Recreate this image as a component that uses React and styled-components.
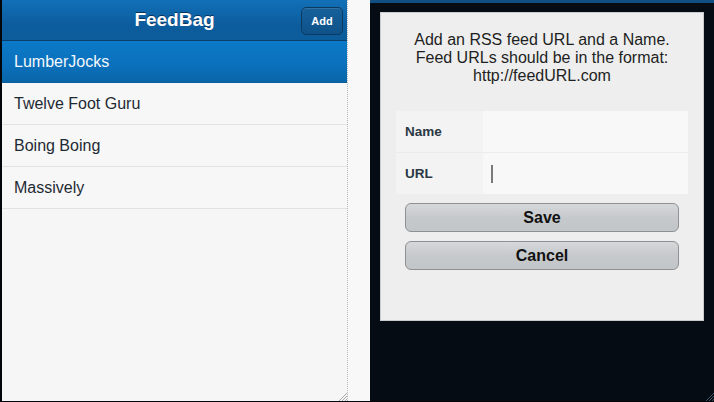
import React from "react";
import styled, { createGlobalStyle } from "styled-components";

const Global = createGlobalStyle`
  html, body { margin: 0; padding: 0; background: #000; }
  body { font-family: "Liberation Sans", Arial, Helvetica, sans-serif; }
`;

const Frame = styled.div`
  display: flex;
  width: 714px;
  height: 402px;
  box-sizing: border-box;
  border-left: 2px solid #02060a;
  border-bottom: 1px solid #02060a;
  overflow: hidden;
`;

const LeftPane = styled.div`
  position: relative;
  width: 345px;
  display: flex;
  flex-direction: column;
  background: #f6f6f6;
  border-right: 1px dotted #b8b8b8;
`;

const Header = styled.div`
  position: relative;
  height: 40px;
  display: flex;
  align-items: center;
  justify-content: center;
  background: linear-gradient(#1270b8, #0c5d9e 60%, #0d5c9a);
  border-bottom: 1px solid #0a3e6c;
`;

const Title = styled.h1`
  margin: 0;
  font-size: 19px;
  font-weight: bold;
  color: #fff;
  text-shadow: 0 -1px 0 #08345c;
`;

const AddButton = styled.button`
  position: absolute;
  right: 4px;
  top: 7px;
  width: 42px;
  height: 28px;
  box-sizing: border-box;
  border: 1px solid #0b3a60;
  border-radius: 5px;
  background: linear-gradient(#16609a, #0f5289);
  box-shadow: inset 0 1px 0 rgba(255,255,255,0.12);
  color: #fff;
  font-family: inherit;
  font-size: 11px;
  font-weight: bold;
  padding: 0;
`;

const List = styled.ul`
  list-style: none;
  margin: 0;
  padding: 0;
`;

const Row = styled.li`
  height: 41px;
  display: flex;
  align-items: center;
  padding-left: 12px;
  font-size: 16px;
  color: ${(p) => (p.$active ? "#f4f8fc" : "#1e2a33")};
  background: ${(p) =>
    p.$active ? "linear-gradient(#0b7ac8, #0b70bb 60%, #0965a8)" : "#f7f7f7"};
  border-bottom: 1px solid ${(p) => (p.$active ? "#0a5f9c" : "#e2e2e2")};
`;

const Grip = styled.svg`
  position: absolute;
  right: 0;
  bottom: 0;
`;

const Strip = styled.div`
  width: 22px;
  background: #f8f8f8;
`;

const RightPane = styled.div`
  position: relative;
  flex: 1;
  background: #050c13;
  border-top: 3px solid #104f82;
  padding: 9px 10px 0 10px;
`;

const Dialog = styled.div`
  box-sizing: border-box;
  height: 309px;
  background: #eeeeee;
  border: 1px solid #c9cbcd;
  padding: 18px 15px 0 15px;
  display: flex;
  flex-direction: column;
`;

const Intro = styled.p`
  margin: 0 0 26px;
  text-align: center;
  font-size: 16px;
  line-height: 18px;
  color: #1d1f22;
`;

const Fields = styled.div`
  display: flex;
  flex-direction: column;
  background: #f8f8f8;
  margin-bottom: 9px;
`;

const Field = styled.label`
  display: flex;
  height: 41px;
  border-top: ${(p) => (p.$first ? "none" : "1px solid #ececec")};
`;

const Label = styled.span`
  width: 87px;
  display: flex;
  align-items: center;
  padding-left: 9px;
  box-sizing: border-box;
  background: #f3f3f3;
  font-size: 13.5px;
  font-weight: bold;
  color: #2a3845;
`;

const Input = styled.span`
  flex: 1;
  display: flex;
  align-items: center;
  padding-left: 8px;
`;

const Caret = styled.span`
  width: 2px;
  height: 18px;
  background: #7a7a7a;
`;

const Buttons = styled.div`
  display: flex;
  flex-direction: column;
  gap: 9px;
  padding: 0 9px;
`;

const Button = styled.button`
  height: 29px;
  box-sizing: border-box;
  border: 1px solid #8e9194;
  border-radius: 6px;
  background: linear-gradient(#d6d8da, #c6c9cc 50%, #c3c6c9);
  font-family: inherit;
  font-size: 16px;
  font-weight: bold;
  color: #111;
  padding: 0;
`;

const feeds = ["LumberJocks", "Twelve Foot Guru", "Boing Boing", "Massively"];

function ResizeGrip({ color }) {
  return (
    <Grip width="10" height="10" viewBox="0 0 10 10">
      <path d="M10 2 L2 10 M10 5 L5 10 M10 8 L8 10" stroke={color} strokeWidth="1" />
    </Grip>
  );
}

export default function App() {
  return (
    <>
      <Global />
      <Frame>
        <LeftPane>
          <Header>
            <Title>FeedBag</Title>
            <AddButton>Add</AddButton>
          </Header>
          <List>
            {feeds.map((f, i) => (
              <Row key={f} $active={i === 0}>
                {f}
              </Row>
            ))}
          </List>
          <ResizeGrip color="#a9a9a9" />
        </LeftPane>
        <Strip />
        <RightPane>
          <Dialog>
            <Intro>
              Add an RSS feed URL and a Name.
              <br />
              Feed URLs should be in the format:
              <br />
              http://feedURL.com
            </Intro>
            <Fields>
              <Field $first>
                <Label>Name</Label>
                <Input />
              </Field>
              <Field>
                <Label>URL</Label>
                <Input>
                  <Caret />
                </Input>
              </Field>
            </Fields>
            <Buttons>
              <Button>Save</Button>
              <Button>Cancel</Button>
            </Buttons>
          </Dialog>
          <ResizeGrip color="#3f5565" />
        </RightPane>
      </Frame>
    </>
  );
}
